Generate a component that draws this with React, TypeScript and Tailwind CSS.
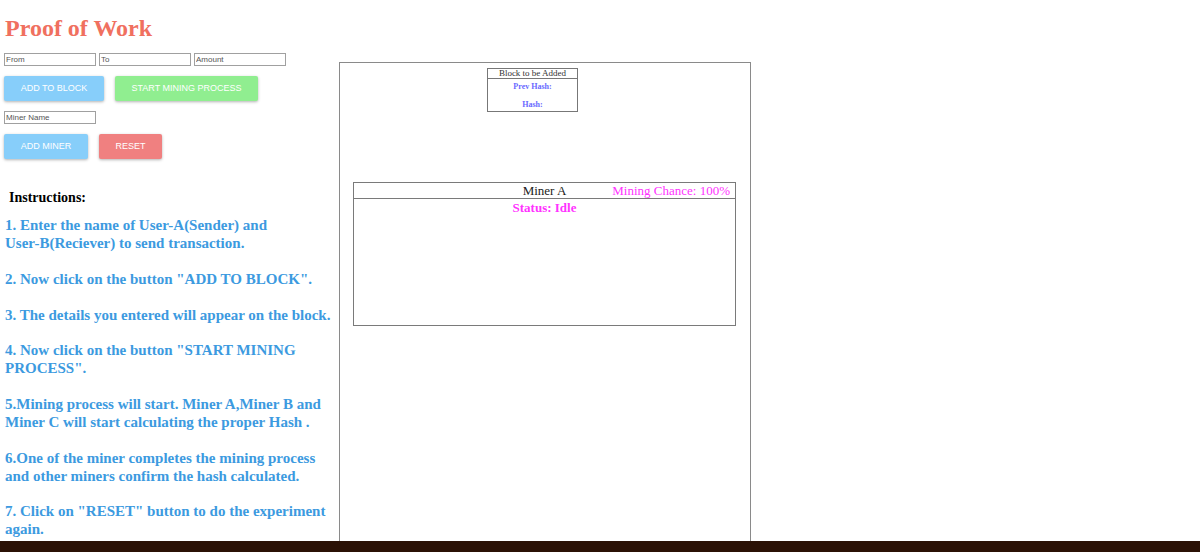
import React from 'react';

const serif = { fontFamily: '"Liberation Serif", "Times New Roman", serif' };
const sans = { fontFamily: '"Liberation Sans", Arial, sans-serif' };

const steps: React.ReactNode[] = [
  <>
    1. Enter the name of User-A(Sender) and
    <br />
    User-B(Reciever) to send transaction.
  </>,
  '2. Now click on the button "ADD TO BLOCK".',
  '3. The details you entered will appear on the block.',
  '4. Now click on the button "START MINING PROCESS".',
  '5.Mining process will start. Miner A,Miner B and Miner C will start calculating the proper Hash .',
  '6.One of the miner completes the mining process and other miners confirm the hash calculated.',
  '7. Click on "RESET" button to do the experiment again.',
];

function Field({ placeholder }: { placeholder: string }) {
  return (
    <input
      placeholder={placeholder}
      style={sans}
      className="block h-[13px] w-[92px] border border-[#a0a0a0] bg-white px-[1px] text-[8px] leading-none text-black placeholder:text-[#555] outline-none"
    />
  );
}

function Btn({ label, className }: { label: string; className: string }) {
  return (
    <button
      style={sans}
      className={`block h-[25px] rounded-[2px] text-[9px] leading-none text-white shadow-[0_1px_3px_rgba(0,0,0,0.3)] ${className}`}
    >
      {label}
    </button>
  );
}

export default function App() {
  return (
    <div className="flex h-[552px] flex-col overflow-hidden bg-white">
      <div className="flex min-h-0 flex-1 overflow-hidden">
        <div className="w-[339px] shrink-0 pl-[4px]">
          <h1 style={serif} className="mt-[14px] h-[28px] pl-[1px] text-[24px] font-bold leading-[28px] text-[#f0705f]">
            Proof of Work
          </h1>
          <div className="mt-[11px] flex gap-[3px]">
            <Field placeholder="From" />
            <Field placeholder="To" />
            <Field placeholder="Amount" />
          </div>
          <div className="mt-[10px] flex gap-[11px]">
            <Btn label="ADD TO BLOCK" className="w-[100px] bg-[#87cefa]" />
            <Btn label="START MINING PROCESS" className="w-[143px] bg-[#90ee90]" />
          </div>
          <div className="mt-[10px] flex">
            <Field placeholder="Miner Name" />
          </div>
          <div className="mt-[10px] flex gap-[11px]">
            <Btn label="ADD MINER" className="w-[84px] bg-[#87cefa]" />
            <Btn label="RESET" className="w-[63px] bg-[#f08080]" />
          </div>
          <div style={serif} className="mt-[30px] pl-[5px] text-[14px] font-bold leading-[18px] text-black">
            Instructions:
          </div>
          <div style={serif} className="mt-[10px] w-[332px] pl-[1px] text-[15px] font-bold leading-[17.9px] text-[#3c9ae0]">
            {steps.map((s, i) => (
              <p key={i} className={i === 0 ? '' : 'mt-[17.9px]'}>
                {s}
              </p>
            ))}
          </div>
        </div>

        <div className="mt-[62px] h-[600px] w-[412px] shrink-0 border border-[#8a8a8a]">
          <div style={serif} className="ml-[147px] mt-[5px] w-[91px] border border-[#777] text-center">
            <div className="border-b border-[#777] text-[9px] leading-[9px] text-[#333]">Block to be Added</div>
            <div className="text-[8px] font-bold leading-[8px] text-[#6a6aff]">
              <div className="mt-[4px]">Prev Hash:</div>
              <div className="mt-[10px] mb-[2px]">Hash:</div>
            </div>
          </div>

          <div style={serif} className="ml-[13px] mr-[14px] mt-[70px] h-[144px] border border-[#7a7a7a]">
            <div className="grid h-[16px] grid-cols-3 items-center border-b border-[#7a7a7a] text-[13px] leading-[16px]">
              <div />
              <div className="text-center text-[#222]">Miner A</div>
              <div className="whitespace-nowrap pr-[5px] text-right text-[#ff33ff]">Mining Chance: 100%</div>
            </div>
            <div className="mt-[1px] text-center text-[13px] font-bold leading-[16px] text-[#ff33ff]">Status: Idle</div>
          </div>
        </div>
      </div>
      <div className="h-[11px] shrink-0 bg-[#2b1105]" />
    </div>
  );
}
